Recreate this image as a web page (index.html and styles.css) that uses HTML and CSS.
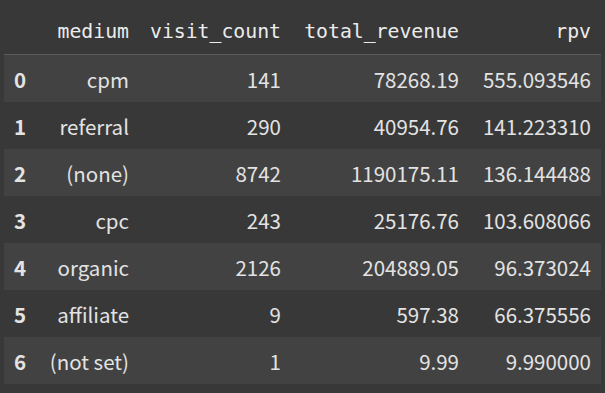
FILE: index.html
```html
<!DOCTYPE html>
<html lang="en">
<head>
    <meta charset="UTF-8">
    <title>rpv by medium</title>
    <link rel="stylesheet" href="styles.css">
</head>
<body>
    <table class="dataframe">
        <colgroup>
            <col class="c-idx"><col class="c-med"><col class="c-visit"><col class="c-rev"><col class="c-rpv">
        </colgroup>
        <thead>
            <tr>
                <th></th>
                <th>medium</th>
                <th>visit_count</th>
                <th>total_revenue</th>
                <th>rpv</th>
            </tr>
        </thead>
        <tbody>
            <tr><th>0</th><td>cpm</td><td>141</td><td>78268.19</td><td>555.093546</td></tr>
            <tr><th>1</th><td>referral</td><td>290</td><td>40954.76</td><td>141.223310</td></tr>
            <tr><th>2</th><td>(none)</td><td>8742</td><td>1190175.11</td><td>136.144488</td></tr>
            <tr><th>3</th><td>cpc</td><td>243</td><td>25176.76</td><td>103.608066</td></tr>
            <tr><th>4</th><td>organic</td><td>2126</td><td>204889.05</td><td>96.373024</td></tr>
            <tr><th>5</th><td>affiliate</td><td>9</td><td>597.38</td><td>66.375556</td></tr>
            <tr><th>6</th><td>(not set)</td><td>1</td><td>9.99</td><td>9.990000</td></tr>
        </tbody>
    </table>
</body>
</html>
```

FILE: styles.css
```css
body {
    margin: 8px 4px;
    background-color: #383838;
    color: #e3e3e3;
    font-family: "Noto Sans CJK JP", "Noto Sans", sans-serif;
}

.dataframe {
    border-collapse: collapse;
    table-layout: fixed;
    width: 597px;
}

.c-idx { width: 33px; }
.c-med { width: 102px; }
.c-visit { width: 152px; }
.c-rev { width: 178px; }
.c-rpv { width: 132px; }

.dataframe thead th {
    height: 46px;
    padding: 0 10px;
    text-align: right;
    font-family: "DejaVu Sans Mono", "Liberation Mono", monospace;
    font-size: 19.8px;
    font-weight: normal;
    color: #ececec;
    border-bottom: 1px solid #5a5a5a;
}

.dataframe tbody th,
.dataframe tbody td {
    height: 47px;
    padding: 0 10px;
    text-align: right;
    font-size: 20.5px;
}

.dataframe tbody th {
    text-align: left;
    font-weight: bold;
}

.dataframe tbody tr:nth-child(odd) {
    background-color: #424242;
}
```
